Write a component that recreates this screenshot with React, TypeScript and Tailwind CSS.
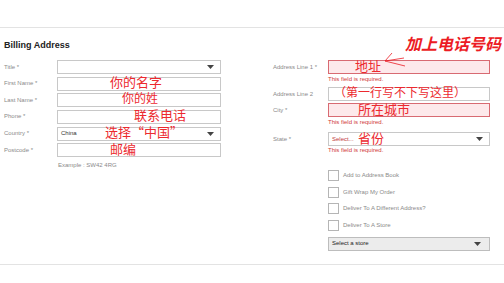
import React from 'react';

const cjk = { fontFamily: '"Noto Sans CJK SC", sans-serif' };

function Caret() {
  return (
    <svg width="7" height="4" viewBox="0 0 7 4" className="shrink-0">
      <polygon points="0,0 7,0 3.5,4" fill="#444" />
    </svg>
  );
}

function Note({ text, pad, size = 'text-[13px]' }: { text: string; pad: string; size?: string }) {
  return (
    <span className={`${pad} ${size} leading-none -translate-y-[2px] text-[#ec2a2f] whitespace-nowrap`} style={cjk}>
      {text}
    </span>
  );
}

function LeftRow({ label, children, select }: { label: string; children?: React.ReactNode; select?: boolean }) {
  return (
    <div className="flex items-center h-[14px]">
      <div className="w-[53px] text-[6px] text-[#8a8a8a]">{label}</div>
      <div className="w-[164px] h-[14px] border border-[#c8c8c8] flex items-center pr-[6px]">
        <div className="flex-1 flex items-center">{children}</div>
        {select && <Caret />}
      </div>
    </div>
  );
}

function Error() {
  return <div className="ml-[55px] text-[6px] leading-[7px] text-[#d03a3a]">This field is required.</div>;
}

function Check({ label }: { label: string }) {
  return (
    <div className="flex items-center h-[11px] ml-[55px]">
      <div className="w-[11px] h-[11px] border border-[#b5b5b5] bg-white" />
      <span className="ml-[4px] text-[6px] text-[#8a8a8a]">{label}</span>
    </div>
  );
}

export default function App() {
  return (
    <div className="relative w-[504px] h-[283px] bg-white overflow-hidden" style={{ fontFamily: '"Liberation Sans", Arial, sans-serif' }}>
      <div className="h-[28px] border-b border-[#e3e3e3]" />
      <div className="pl-[4px] pt-[11px] h-[32px] text-[9px] font-bold text-[#222] leading-[12px]">Billing Address</div>

      <div className="flex">
        {/* left column */}
        <div className="w-[273px] pl-[4px] flex flex-col gap-[2.67px]">
          <LeftRow label="Title *" select />
          <LeftRow label="First Name *">
            <Note text="你的名字" pad="pl-[52px]" />
          </LeftRow>
          <LeftRow label="Last Name *">
            <Note text="你的姓" pad="pl-[64px]" size="text-[12px]" />
          </LeftRow>
          <LeftRow label="Phone *">
            <Note text="联系电话" pad="pl-[76px]" />
          </LeftRow>
          <LeftRow label="Country *" select>
            <span className="pl-[3px] w-[47px] text-[6px] text-[#333]">China</span>
            <Note text="选择“中国”" pad="" />
          </LeftRow>
          <LeftRow label="Postcode *">
            <Note text="邮编" pad="pl-[52px]" />
          </LeftRow>
          <div className="ml-[54px] mt-[1px] text-[6px] text-[#8a8a8a]">Example : SW42 4RG</div>
        </div>

        {/* right column */}
        <div className="flex flex-col">
          <div className="flex items-center h-[14px]">
            <div className="w-[55px] text-[6px] text-[#8a8a8a]">Address Line 1 *</div>
            <div className="w-[162px] h-[14px] border border-[#d86a72] bg-[#fde9eb] flex items-center">
              <Note text="地址" pad="pl-[26px]" />
            </div>
          </div>
          <div className="mt-[2px]"><Error /></div>
          <div className="flex items-center h-[14px] mt-[4px]">
            <div className="w-[55px] text-[6px] text-[#8a8a8a]">Address Line 2</div>
            <div className="w-[162px] h-[14px] border border-[#c8c8c8] flex items-center">
              <Note text="（第一行写不下写这里）" pad="pl-[5px]" size="text-[12px]" />
            </div>
          </div>
          <div className="flex items-center h-[14px] mt-[2px]">
            <div className="w-[55px] text-[6px] text-[#8a8a8a]">City *</div>
            <div className="w-[162px] h-[14px] border border-[#d86a72] bg-[#fde9eb] flex items-center">
              <Note text="所在城市" pad="pl-[29px]" />
            </div>
          </div>
          <div className="mt-[2px]"><Error /></div>
          <div className="flex items-center h-[14px] mt-[6px]">
            <div className="w-[55px] text-[6px] text-[#8a8a8a]">State *</div>
            <div className="w-[162px] h-[14px] border border-[#c8c8c8] flex items-center pr-[6px]">
              <span className="pl-[3px] w-[29px] text-[6px] text-[#c0393b]">Select...</span>
              <Note text="省份" pad="" />
              <div className="flex-1" />
              <Caret />
            </div>
          </div>
          <div className="mt-[1px]"><Error /></div>
          <div className="mt-[16px] flex flex-col gap-[5.67px]">
            <Check label="Add to Address Book" />
            <Check label="Gift Wrap My Order" />
            <Check label="Deliver To A Different Address?" />
            <Check label="Deliver To A Store" />
          </div>
          <div className="ml-[55px] mt-[6px] w-[162px] h-[14px] border border-[#bdbdbd] bg-[#ececec] flex items-center pl-[3px] pr-[8px]">
            <span className="flex-1 text-[6px] text-[#222]">Select a store</span>
            <Caret />
          </div>
        </div>
      </div>

      <div className="absolute left-0 right-0 top-[264px] border-t border-[#e3e3e3]" />

      {/* handwritten annotation */}
      <div className="absolute left-[405px] top-[35px] text-[16px] font-bold italic leading-none text-[#ec1c24] whitespace-nowrap" style={cjk}>
        加上电话号码
      </div>
      <svg className="absolute left-0 top-0" width="504" height="283">
        <polyline points="392,53 385,61 404,58" fill="none" stroke="#ec1c24" strokeWidth="0.8" />
        <polyline points="385,61 405,66" fill="none" stroke="#ec1c24" strokeWidth="0.8" />
      </svg>
    </div>
  );
}
